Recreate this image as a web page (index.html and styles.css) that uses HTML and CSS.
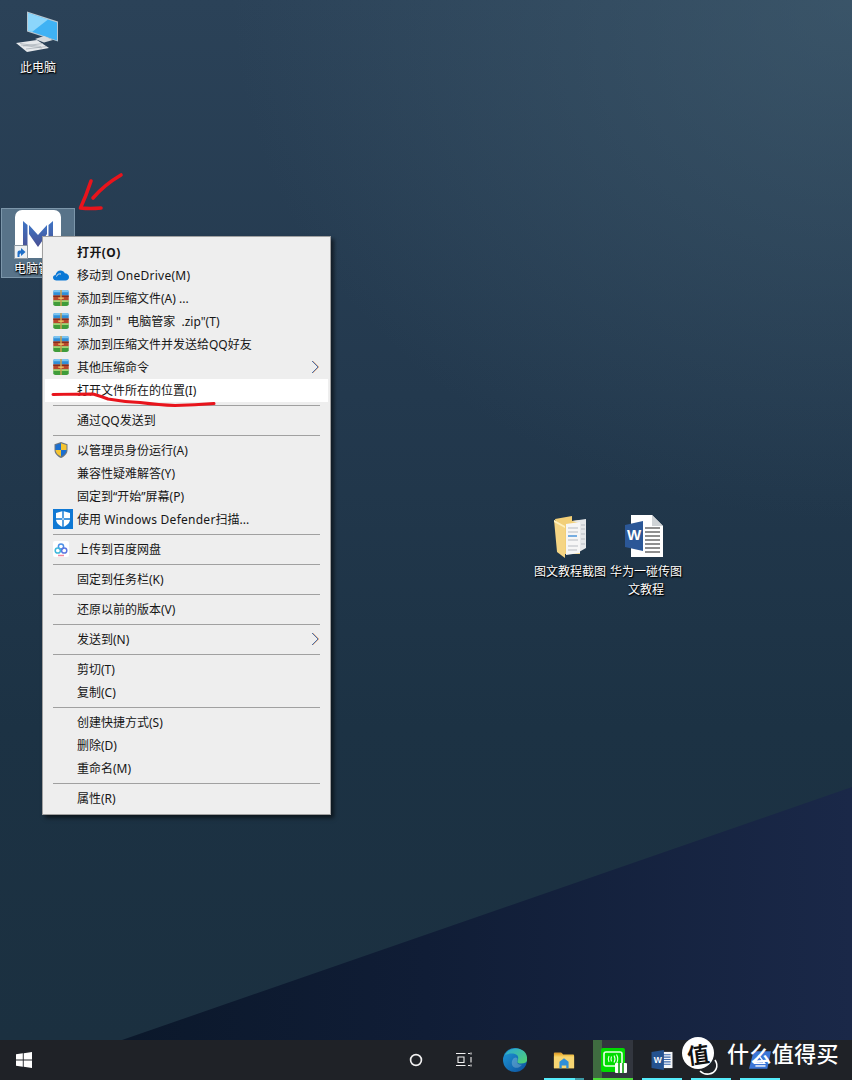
FILE: index.html
```html
<!DOCTYPE html>
<html lang="zh-CN">
<head>
<meta charset="utf-8">
<title>桌面右键菜单</title>
<link rel="stylesheet" href="styles.css">
</head>
<body>
<svg class="defs" width="0" height="0" aria-hidden="true">
  <symbol id="rar" viewBox="1 1 14 14.500">
    <path d="M1 2.500Q1 1 3 1h10q2 0 2 1.500V6H1z" fill="#2f8fd8"/>
    <path d="M1 1.800Q1 1 3 1h10q2 0 2 .8V3H1z" fill="#7cc4f0"/>
    <rect x="1" y="6" width="14" height="4.500" fill="#b9472c"/>
    <rect x="1" y="6" width="14" height="1.200" fill="#7c2a1a"/>
    <path d="M1 10.500h14V14q0 1.500-2 1.500H3Q1 15.500 1 14z" fill="#3f9c3a"/>
    <rect x="1" y="10.500" width="14" height="1.200" fill="#b7e27c"/>
    <rect x="7.300" y="1" width="1.400" height="14.500" fill="#c8a050"/>
    <rect x="5.500" y="7.800" width="5" height="1.200" fill="#eec565"/>
  </symbol>
  <symbol id="chev" viewBox="0 0 10 14">
    <path d="M1.500 1l6 6-6 6" fill="none" stroke="#d9823f" stroke-width="1"/>
    <path d="M1 1l6 6-6 6" fill="none" stroke="#4a6fa8" stroke-width="1"/>
  </symbol>
  <linearGradient id="mbar" x1="0" y1="0" x2="0" y2="1">
    <stop offset="0" stop-color="#3f74c4"/><stop offset="1" stop-color="#4a4f92"/>
  </linearGradient>
</svg>

<main class="desktop">
  <div class="wedge"></div>

  <div class="desk-icon pc">
    <svg class="pc-art" viewBox="0 0 44 44">
      <path d="M12 1.500 43 11.500v20L12 21.500z" fill="#b8c6d0"/>
      <path d="M13 3 42 12.500v18L13 20.500z" fill="#3fb2f4"/>
      <path d="M13 3 33 9.500 17 22l-4-1.500z" fill="#8cd6fb"/>
      <path d="M20 29l9-3 9 4-9 2.500z" fill="#d5dadd"/>
      <path d="M1 33 22 30l12 8-22 4z" fill="#e6e9ec"/>
      <path d="M5 33.500l21 3M8 36l20-2.500M11 39l21-2.500M6 35l21 3" stroke="#a4acb3" stroke-width=".7"/>
    </svg>
    <span class="label">此电脑</span>
  </div>

  <div class="desk-icon shortcut">
    <div class="tile">
      <svg class="m-art" viewBox="0 0 46 48">
        <path d="M8 11l4.500 4v25l-4.500-2z" fill="url(#mbar)"/>
        <path d="M14 15 23 25l9-10v9L23 37l-9-13z" fill="url(#mbar)"/>
        <path d="M33.500 15 38 11v27l-4.500 2z" fill="url(#mbar)"/>
      </svg>
      <span class="badge">
        <svg viewBox="0 0 12 12"><path d="M2.500 11V6.500q0-2 2-2H6V2l4.500 4L6 10V7.500H5.500Q4.500 7.500 4.500 9v2z" fill="#1f6fc8"/></svg>
      </span>
    </div>
    <span class="label">电脑管家</span>
  </div>

  <div class="desk-icon folder">
    <svg class="folder-art" viewBox="0 0 33 42">
      <path d="M1 3 18 0v5l8-1v34H9z" fill="#f2cf78"/>
      <path d="M18 5l14-2v29l-7 4V7z" fill="#e6e8ea"/>
      <path d="M12 8l14-2v31l-14 2z" fill="#f6f6f6"/>
      <path d="M14 12h10M14 16h10M14 24h10M14 30h10M14 34h9" stroke="#b7bcc2" stroke-width="1.200"/>
      <path d="M14 20h9" stroke="#3f8fd8" stroke-width="1.400"/>
      <path d="M27 9h4M27 13h4M27 18h4M27 23h4M27 28h4" stroke="#b7bcc2" stroke-width="1"/>
      <path d="M0 4 11 10v32L3 36z" fill="#f5d584"/>
      <path d="M0 4l11 6v2L0 6z" fill="#fff0bc"/>
    </svg>
    <span class="label">图文教程截图</span>
  </div>

  <div class="desk-icon word">
    <svg class="word-art" viewBox="0 0 38 42">
      <path d="M6 0h21l11 11v31H6z" fill="#fff"/>
      <path d="M27 0l11 11H27z" fill="#cfd3d6"/>
      <path d="M20 13h15M20 17h15M20 21h15M20 25h15M20 29h15M20 33h15M20 37h15" stroke="#8f8f8f" stroke-width="1.800"/>
      <path d="M0 10 18 6v30L0 32z" fill="#2b5797"/>
      <text class="w-mark" x="9" y="25" text-anchor="middle">W</text>
    </svg>
    <span class="label">华为一碰传图文教程</span>
  </div>

  <nav class="menu">
    <div class="row bold"><span class="slot"></span><span>打开(O)</span></div>
    <div class="row"><span class="slot"><svg class="i16" viewBox="0 0 16 16"><path d="M3.500 13.500C1.500 13.500 0 12.300 0 10.500 0 9 1.200 8 2.500 8 3 5.500 5 3.500 7.500 3.500c2 0 3.500 1 4.300 2.800 2.300 0 4.200 1.800 4.200 3.800 0 2-1.500 3.400-3.500 3.400z" fill="#0a78d6"/><path d="M3.500 9.500C4 7.500 6 6.500 8 7" fill="none" stroke="#eee" stroke-width=".9"/></svg></span><span>移动到 <span class="lat">OneDrive(M)</span></span></div>
    <div class="row"><span class="slot"><svg class="i16"><use href="#rar"/></svg></span><span>添加到压缩文件(A) ...</span></div>
    <div class="row"><span class="slot"><svg class="i16"><use href="#rar"/></svg></span><span class="pre">添加到 "  电脑管家  .zip"(T)</span></div>
    <div class="row"><span class="slot"><svg class="i16"><use href="#rar"/></svg></span><span>添加到压缩文件并发送给QQ好友</span></div>
    <div class="row"><span class="slot"><svg class="i16"><use href="#rar"/></svg></span><span>其他压缩命令</span><svg class="chev"><use href="#chev"/></svg></div>
    <div class="row active"><span class="slot"></span><span>打开文件所在的位置(I)</span></div>
    <div class="sep"></div>
    <div class="row"><span class="slot"></span><span>通过QQ发送到</span></div>
    <div class="sep"></div>
    <div class="row"><span class="slot"><svg class="i16" viewBox="0 0 16 16"><path d="M8 0l6.500 2.200V8c0 3.800-3 6.500-6.500 8-3.500-1.500-6.500-4.200-6.500-8V2.200z" fill="#6c7680"/><path d="M8 1.200V8H2.500V3z" fill="#1b6fd0"/><path d="M8 1.200 13.500 3v5H8z" fill="#f6c42f"/><path d="M2.500 8H8v6.500C5 13.200 2.700 11 2.500 8z" fill="#f6c42f"/><path d="M8 8h5.500C13.300 11 11 13.200 8 14.500z" fill="#1b6fd0"/></svg></span><span>以管理员身份运行(A)</span></div>
    <div class="row"><span class="slot"></span><span>兼容性疑难解答(Y)</span></div>
    <div class="row"><span class="slot"></span><span>固定到“开始”屏幕(P)</span></div>
    <div class="row"><span class="slot"><svg class="i20" viewBox="0 0 20 20"><rect width="20" height="20" fill="#0f78d4"/><path d="M10 2l7 2v6c0 4-3 6.500-7 8-4-1.500-7-4-7-8V4z" fill="#fff"/><path d="M9.300 2v16h1.400V2zM3 9.300h14v1.400H3z" fill="#0f78d4"/></svg></span><span>使用 <span class="lat">Windows Defender</span>扫描...</span></div>
    <div class="sep"></div>
    <div class="row"><span class="slot"><svg class="i16" viewBox="0 0 16 16"><rect width="16" height="16" rx="2" fill="#fff"/><circle cx="8" cy="5.500" r="2.600" fill="none" stroke="#4b8fe6" stroke-width="1.500"/><circle cx="4.800" cy="9.500" r="2.600" fill="none" stroke="#3fb8dc" stroke-width="1.500"/><circle cx="11.200" cy="9.500" r="2.600" fill="none" stroke="#5c78e0" stroke-width="1.500"/><path d="M5 14.500h6" stroke="#f28aa0" stroke-width="1.500"/></svg></span><span>上传到百度网盘</span></div>
    <div class="sep"></div>
    <div class="row"><span class="slot"></span><span>固定到任务栏(K)</span></div>
    <div class="sep"></div>
    <div class="row"><span class="slot"></span><span>还原以前的版本(V)</span></div>
    <div class="sep"></div>
    <div class="row"><span class="slot"></span><span>发送到(N)</span><svg class="chev"><use href="#chev"/></svg></div>
    <div class="sep"></div>
    <div class="row"><span class="slot"></span><span>剪切(T)</span></div>
    <div class="row"><span class="slot"></span><span>复制(C)</span></div>
    <div class="sep"></div>
    <div class="row"><span class="slot"></span><span>创建快捷方式(S)</span></div>
    <div class="row"><span class="slot"></span><span>删除(D)</span></div>
    <div class="row"><span class="slot"></span><span>重命名(M)</span></div>
    <div class="sep"></div>
    <div class="row"><span class="slot"></span><span>属性(R)</span></div>
  </nav>

  <svg class="ink" viewBox="0 0 852 1040" aria-hidden="true">
    <path d="M121 175Q104 185 93 198" />
    <path d="M91 181Q86 196 80.500 208Q90 209 101 208" />
    <path class="thin" d="M53 394.500Q75 394 93 394Q100 396 108 399Q125 402 140 402.500Q160 405 175 405.500Q195 405 214 403.500"/>
  </svg>
</main>

<footer class="taskbar">
  <div class="start">
    <svg class="win" viewBox="0 0 16 16"><path d="M0 2.300 6.800 1.300V7.500H0zM7.700 1.200 16 0V7.500H7.700zM0 8.400H6.800V14.700L0 13.700zM7.700 8.400H16V16L7.700 14.800z" fill="#fff"/></svg>
  </div>
  <div class="tasks">
    <div class="task"><svg class="t24 nudge-s" viewBox="0 0 24 24"><circle cx="12" cy="12" r="6.500" fill="none" stroke="#f0f0f0" stroke-width="2"/></svg></div>
    <div class="task"><svg class="view nudge-l" viewBox="0 0 16 16" fill="none" stroke="#f0f0f0" stroke-width="1.100"><path d="M0 1.500h9.500M0 13.500h9.500M2 5h6v5.500H2zM12 1.500h2M12 13.500h2M15 5v5.500M15 .5v2M15 12.500v2"/></svg></div>
    <div class="task"><svg class="t24 big" viewBox="0 0 24 24">
      <defs>
        <linearGradient id="eb" x1="0" y1="0" x2="1" y2="1"><stop offset="0" stop-color="#1f9ad8"/><stop offset="1" stop-color="#0c4f9c"/></linearGradient>
        <linearGradient id="eg" x1="0" y1="0" x2="1" y2="1"><stop offset="0" stop-color="#2aa8d8"/><stop offset="1" stop-color="#52d26e"/></linearGradient>
      </defs>
      <circle cx="12" cy="12" r="12" fill="url(#eb)"/>
      <path d="M2 7C5 1 13-1 19 2c4 2 5.500 6 5 10.500-.3 2-2.500 3-6 3-3 0-4-1-3.500-2.500C15.500 11 16 7 12 6 8 5 4 6 2 7z" fill="url(#eg)"/>
      <path d="M14 13.500c0 2.500 2.500 3.500 5 3.200-2 3-5.500 3.800-8 2.500C8 17.500 8 12.500 11 10c2-1.500 4 0 3.500 1.500z" fill="#dff5f2" opacity=".25"/>
    </svg></div>
    <div class="task open split"><svg class="t24" viewBox="0 0 24 20"><path d="M1 3q0-1 1-1h7l2 2h11q1 0 1 1v14H1z" fill="#f1c24a"/><path d="M1 2h8l2 2H1z" fill="#e0a030"/><path d="M1 6h22v13H1z" fill="#f7d672"/><path d="M7 12l5-4 5 4v7h-2.500v-3h-5v3H7z" fill="#2f8fd8"/></svg></div>
    <div class="task active">
      <svg class="t24 big" viewBox="0 0 24 24">
        <rect width="24" height="24" rx="2" fill="#00dc00"/>
        <rect x="3" y="4" width="18" height="14" rx="2" fill="none" stroke="#e8ffe8" stroke-width="1.600"/>
        <path d="M8 8q-1.500 3 0 6M10.500 8.500q-1 2.500 0 5M13 7.500q2 3.500 0 7M15.500 6.500q2.500 4.500 0 9" fill="none" stroke="#e8ffe8" stroke-width="1.100"/>
      </svg>
      <span class="pause"></span>
    </div>
    <div class="task open"><svg class="t24" viewBox="0 0 22 21"><path d="M9 2h13v17H9z" fill="#f4f6f8"/><path d="M12 5h8M12 7.500h8M12 10h8M12 12.500h8M12 15h8" stroke="#3a68ad" stroke-width="1.200"/><path d="M0 2 13 0v21L0 19z" fill="#24528f"/><text class="w-mark small" x="6.500" y="14" text-anchor="middle">W</text></svg></div>
    <div class="task open"></div>
    <div class="task open"><svg class="t24" viewBox="0 0 24 19"><path d="M5 0h19l-4 19H0z" fill="#3b76d6"/><path d="M11 5l6 8H6z" fill="none" stroke="#fff" stroke-width="1.500"/><path d="M7 16h11" stroke="#fff" stroke-width="1.500"/></svg></div>
  </div>
</footer>

<aside class="mark">
  <span class="mark-badge">
    <svg class="mark-art" viewBox="0 0 46 40">
      <path d="M35 24c4 6 1 13-6 14-4 .5-7-1-9-3" fill="none" stroke="#fff" stroke-width="1.600"/>
      <circle cx="18" cy="17" r="16" fill="#fff"/>
    </svg>
    <span class="mark-glyph">值</span>
  </span>
  <span class="mark-text">什么值得买</span>
</aside>
</body>
</html>
```
FILE: styles.css
```css
* { box-sizing: border-box; }

html, body {
  margin: 0;
  padding: 0;
  width: 852px;
  height: 1080px;
  overflow: hidden;
  background: #14263a;
}

body {
  position: relative;
  font-family: "Noto Sans", "Noto Sans CJK SC", sans-serif;
  font-size: 12px;
  color: #161616;
}

.defs { position: absolute; }

.desktop {
  position: relative;
  height: 1040px;
  overflow: hidden;
  background:
    radial-gradient(ellipse 620px 520px at 100% 0, rgba(74, 104, 122, .48), rgba(74, 104, 122, 0)),
    linear-gradient(180deg, #2b4258 0, #23394e 38%, #1c3244 70%, #1b3040 100%);
}

.wedge {
  position: absolute;
  inset: 0;
  background: linear-gradient(90deg, #0b182b 15%, #101d36 50%, #1a2848 100%);
  clip-path: polygon(122px 1040px, 852px 787px, 852px 1040px);
}

/* desktop icons */
.desk-icon {
  position: absolute;
  width: 74px;
  display: flex;
  flex-direction: column;
  align-items: center;
}
.pc { left: 1px; top: 10px; }
.shortcut {
  left: 1px;
  top: 208px;
  height: 70px;
  padding-top: 1px;
  background: #587389;
  border: 1px solid #7c96aa;
}
.folder { left: 533px; top: 516px; }
.word { left: 609px; top: 515px; }

.label {
  color: #fff;
  font-size: 12px;
  line-height: 18px;
  text-align: center;
  text-shadow: 0 1px 2px #000, 1px 1px 1px #000;
}

.pc-art { width: 44px; height: 44px; margin-left: -2px; }
.pc .label { margin-top: 5px; }

.tile {
  position: relative;
  width: 46px;
  height: 48px;
  background: #fff;
  border-radius: 7px;
}
.m-art { display: block; width: 46px; height: 48px; }
.badge {
  position: absolute;
  left: -1px;
  bottom: -1px;
  width: 14px;
  height: 14px;
  background: #eef1f3;
  border: 1px solid #8f9aa3;
}
.badge svg { display: block; width: 12px; height: 12px; }
.shortcut .label { margin-top: 2px; white-space: nowrap; }

.folder-art { width: 33px; height: 42px; }
.folder .label { margin-top: 5px; white-space: nowrap; }
.word-art { width: 38px; height: 42px; margin-left: -4px; }
.word .label { margin-top: 6px; width: 74px; }
.w-mark {
  font-family: "Liberation Sans", sans-serif;
  font-weight: 700;
  font-size: 15px;
  fill: #fff;
}
.w-mark.small { font-size: 9px; }

/* context menu */
.menu {
  position: absolute;
  left: 42px;
  top: 236px;
  width: 289px;
  height: 579px;
  padding: 4px 2px;
  background: #eee;
  border: 1px solid #a0a0a0;
  box-shadow: 3px 3px 4px rgba(0, 0, 0, .55);
}
.row {
  display: flex;
  align-items: center;
  height: 23px;
  padding: 0 0 2px 8px;
  white-space: nowrap;
}
.row.bold { font-weight: 700; letter-spacing: .4px; }
.row.active { background: #fff; }
.pre { white-space: pre; }
.lat { letter-spacing: .26px; }
.slot {
  flex: none;
  width: 24px;
  height: 20px;
  display: flex;
  align-items: center;
}
.i16 { display: block; width: 16px; height: 16px; }
.i20 { display: block; width: 20px; height: 20px; }
.chev {
  width: 10px;
  height: 14px;
  margin-left: auto;
  margin-right: 7px;
}
.sep {
  height: 1px;
  margin: 3px 8px;
  background: #a0a0a0;
}

/* hand-drawn annotations */
.ink {
  position: absolute;
  inset: 0;
  width: 852px;
  height: 1040px;
  fill: none;
  stroke: #e8141c;
  stroke-width: 3.600;
  stroke-linecap: round;
  stroke-linejoin: round;
  pointer-events: none;
}
.ink .thin { stroke-width: 3; }

/* taskbar */
.taskbar {
  display: flex;
  height: 40px;
  background: #1f2227;
}
.start {
  flex: none;
  width: 48px;
  display: flex;
  align-items: center;
  justify-content: center;
}
.win { width: 16px; height: 16px; }
.tasks {
  display: flex;
  gap: 9px;
  margin-left: 349px;
}
.task {
  position: relative;
  flex: none;
  width: 40px;
  height: 40px;
  display: flex;
  align-items: center;
  justify-content: center;
  border-bottom: 2px solid transparent;
  padding-top: 2px;
}
.task.open { border-bottom-color: #55ecfb; }
.task.split { border-image: linear-gradient(90deg, #55ecfb 77%, #3c9ba6 77%) 1; }
.task.active {
  background: linear-gradient(90deg, #3f6b40 9px, #32363e 9px);
  border-bottom-color: #4ade38;
}
.t24 { display: block; width: 22px; height: 20px; }
.t24.big { width: 24px; height: 24px; }
.view { display: block; width: 16px; height: 16px; }
.nudge-s { margin-left: -2px; }
.nudge-l { margin-left: -4px; }
.pause {
  position: absolute;
  left: 22px;
  top: 23px;
  width: 12px;
  height: 10px;
  background: linear-gradient(90deg, #fff 3px, #3fb03f 3px, #3fb03f 5px, #fff 5px, #fff 7px, #3fb03f 7px, #3fb03f 9px, #fff 9px);
  border-radius: 1px;
}

/* watermark */
.mark {
  position: absolute;
  left: 680px;
  top: 1036px;
  display: flex;
  align-items: flex-start;
  color: #fff;
}
.mark-badge {
  position: relative;
  flex: none;
  width: 46px;
  height: 40px;
}
.mark-art { display: block; width: 46px; height: 40px; }
.mark-glyph {
  position: absolute;
  left: 7px;
  top: 1px;
  width: 22px;
  font-family: "Noto Sans CJK SC", sans-serif;
  font-size: 22px;
  font-weight: 700;
  line-height: 32px;
  color: #111;
  transform: rotate(-8deg);
}
.mark-text {
  margin-left: 1px;
  font-family: "Noto Sans CJK SC", sans-serif;
  font-size: 22px;
  font-weight: 500;
  line-height: 32px;
  letter-spacing: .4px;
  white-space: nowrap;
}
```
